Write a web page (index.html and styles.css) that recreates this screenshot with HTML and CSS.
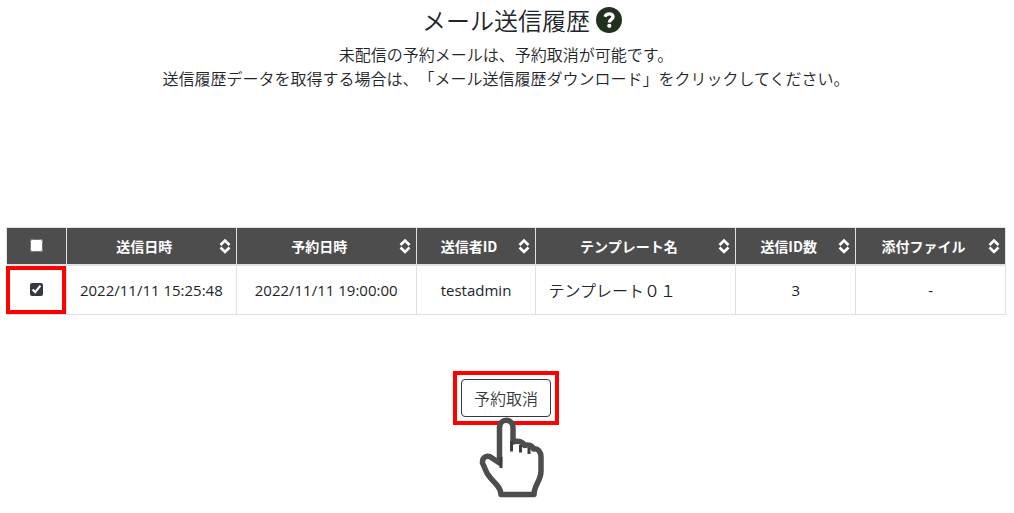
FILE: index.html
```html
<!DOCTYPE html>
<html lang="ja">
<head>
    <meta charset="UTF-8">
    <meta name="viewport" content="width=device-width, initial-scale=1.0">
    <title>メール送信履歴</title>
    <link rel="stylesheet" href="styles.css">
</head>
<body>
    <svg width="0" height="0" class="symbols" aria-hidden="true">
        <symbol id="sort" viewBox="0 0 12 16">
            <path d="M1.500 7 L6 2.500 L10.500 7 M1.500 9.500 L6 14 L10.500 9.500" fill="none" stroke="currentColor" stroke-width="2.600"/>
        </symbol>
    </svg>
    <header class="page-header">
        <div class="title-row">
            <h1>メール送信履歴</h1>
            <button type="button" class="help" aria-label="ヘルプ">
                <svg viewBox="0 0 26 26" aria-hidden="true">
                    <circle cx="13" cy="13" r="13" fill="#22301f"/>
                    <path d="M9 9.800 C9.800 7.500 11.200 6.900 13.100 6.900 C15.500 6.900 17 8 17 9.900 C17 12.500 13.400 12.300 13.400 15.400" fill="none" stroke="#fff" stroke-width="3.400"/>
                    <circle cx="13.300" cy="18.800" r="2.100" fill="#fff"/>
                </svg>
            </button>
        </div>
        <p>未配信の予約メールは、予約取消が可能です。<br>送信履歴データを取得する場合は、「メール送信履歴ダウンロード」をクリックしてください。</p>
    </header>
    <main>
        <form>
            <table class="history">
                <colgroup>
                    <col class="col-check">
                    <col class="col-sent">
                    <col class="col-reserved">
                    <col class="col-sender">
                    <col class="col-template">
                    <col class="col-count">
                    <col class="col-file">
                </colgroup>
                <thead>
                    <tr>
                        <th><input type="checkbox" aria-label="すべて選択"></th>
                        <th><button type="button" class="sort"><span>送信日時</span><svg><use href="#sort"/></svg></button></th>
                        <th><button type="button" class="sort"><span>予約日時</span><svg><use href="#sort"/></svg></button></th>
                        <th><button type="button" class="sort"><span>送信者ID</span><svg><use href="#sort"/></svg></button></th>
                        <th><button type="button" class="sort"><span>テンプレート名</span><svg><use href="#sort"/></svg></button></th>
                        <th><button type="button" class="sort"><span>送信ID数</span><svg><use href="#sort"/></svg></button></th>
                        <th><button type="button" class="sort"><span>添付ファイル</span><svg><use href="#sort"/></svg></button></th>
                    </tr>
                </thead>
                <tbody>
                    <tr>
                        <td class="marked"><input type="checkbox" aria-label="選択" checked></td>
                        <td>2022/11/11 15:25:48</td>
                        <td>2022/11/11 19:00:00</td>
                        <td>testadmin</td>
                        <td class="template">テンプレート０１</td>
                        <td>3</td>
                        <td>-</td>
                    </tr>
                </tbody>
            </table>
            <div class="actions">
                <div class="frame">
                    <button type="button" class="cancel">予約取消</button>
                    <!-- 指カーソル -->
                    <svg class="hand" viewBox="0 0 66 82" aria-hidden="true">
                        <path d="M20.500 46 V11 C20.500 0.500 34 0.500 34 11 V25 C39 23 44 25 45.500 28.500 C49 27 53.500 28.500 54.500 32 C59 31 62 35 62 40 V54 C62 64 55 68 55 77.500 H22 C22 68 11 64 7 54 L3.500 46 C3 39 9 38 13 41 Z" fill="#fff" stroke="#4d4d4d" stroke-width="5.500" stroke-linejoin="round"/>
                        <path d="M22 51 V40 M32.500 34.500 V24 M41.500 35.500 V28 M50 37 V31" fill="none" stroke="#3d3d3d" stroke-width="3"/>
                    </svg>
                </div>
            </div>
        </form>
    </main>
</body>
</html>
```

FILE: styles.css
```css
* {
    box-sizing: border-box;
}
body {
    margin: 0;
    padding: 6px 8px 0 6px;
    background-color: #fff;
    color: #212529;
    font-family: "Noto Sans CJK JP", sans-serif;
    font-size: 16px;
    font-weight: 350;
    line-height: 24px;
    text-spacing-trim: space-all;
}
button {
    font-family: inherit;
    cursor: pointer;
}
input {
    display: block;
    width: 13px;
    height: 13px;
    margin: 0 auto;
    accent-color: #343a40;
}
.symbols {
    position: absolute;
}
.page-header {
    text-align: center;
}
.title-row {
    display: grid;
    grid-template-columns: 1fr auto 1fr;
    align-items: center;
    column-gap: 6px;
}
h1 {
    grid-column: 2;
    margin: 0;
    font-size: 24px;
    font-weight: 350;
    line-height: 28px;
}
.help {
    width: 26px;
    height: 26px;
    padding: 0;
    border: none;
    background: none;
}
.help svg {
    display: block;
}
.page-header p {
    margin: 8px 0 137px;
}

/* 履歴テーブル */
.history {
    width: 100%;
    table-layout: fixed;
    border-collapse: collapse;
    text-align: center;
}
.col-check { width: 6%; }
.col-sent { width: 17%; }
.col-reserved { width: 18%; }
.col-sender { width: 12%; }
.col-template { width: 20%; }
.col-count { width: 12%; }
.col-file { width: 15%; }
.history th,
.history td {
    border: 1px solid #dee2e6;
    padding: 0;
}
.history th {
    height: 37px;
    border-bottom-width: 2px;
    background-color: #4d4d4d;
    color: #fff;
}
.history td {
    height: 50px;
    font-family: "Open Sans", "Noto Sans CJK JP", sans-serif;
    font-size: 15px;
    font-weight: 400;
}
.history .template {
    padding-left: 12px;
    font-family: "Noto Sans CJK JP", sans-serif;
    font-size: 16px;
    font-weight: 350;
    text-align: left;
}
.sort {
    display: flex;
    align-items: center;
    width: 100%;
    padding: 0 5px 0 3px;
    border: none;
    background: none;
    color: inherit;
    font-size: 14px;
    font-weight: 700;
    line-height: 24px;
}
.sort span {
    flex: 1;
}
.sort svg {
    width: 12px;
    height: 16px;
}
.history .marked {
    position: relative;
}
.marked::after {
    content: "";
    position: absolute;
    inset: 0 0 0 -1px;
    border: 4px solid #f00;
    pointer-events: none;
}

/* 操作ボタン */
.actions {
    display: flex;
    justify-content: center;
    margin-top: 56px;
    padding-bottom: 88px;
}
.frame {
    position: relative;
    padding: 4px;
    border: 4px solid #f00;
}
.cancel {
    display: block;
    padding: 6px 12px;
    border: 1px solid #343a40;
    border-radius: 4px;
    background-color: #fff;
    color: #343a40;
    font-size: 16px;
    font-weight: 350;
    line-height: 24px;
}
.hand {
    position: absolute;
    top: 42px;
    left: 22px;
    width: 66px;
    height: 82px;
    pointer-events: none;
}
```
